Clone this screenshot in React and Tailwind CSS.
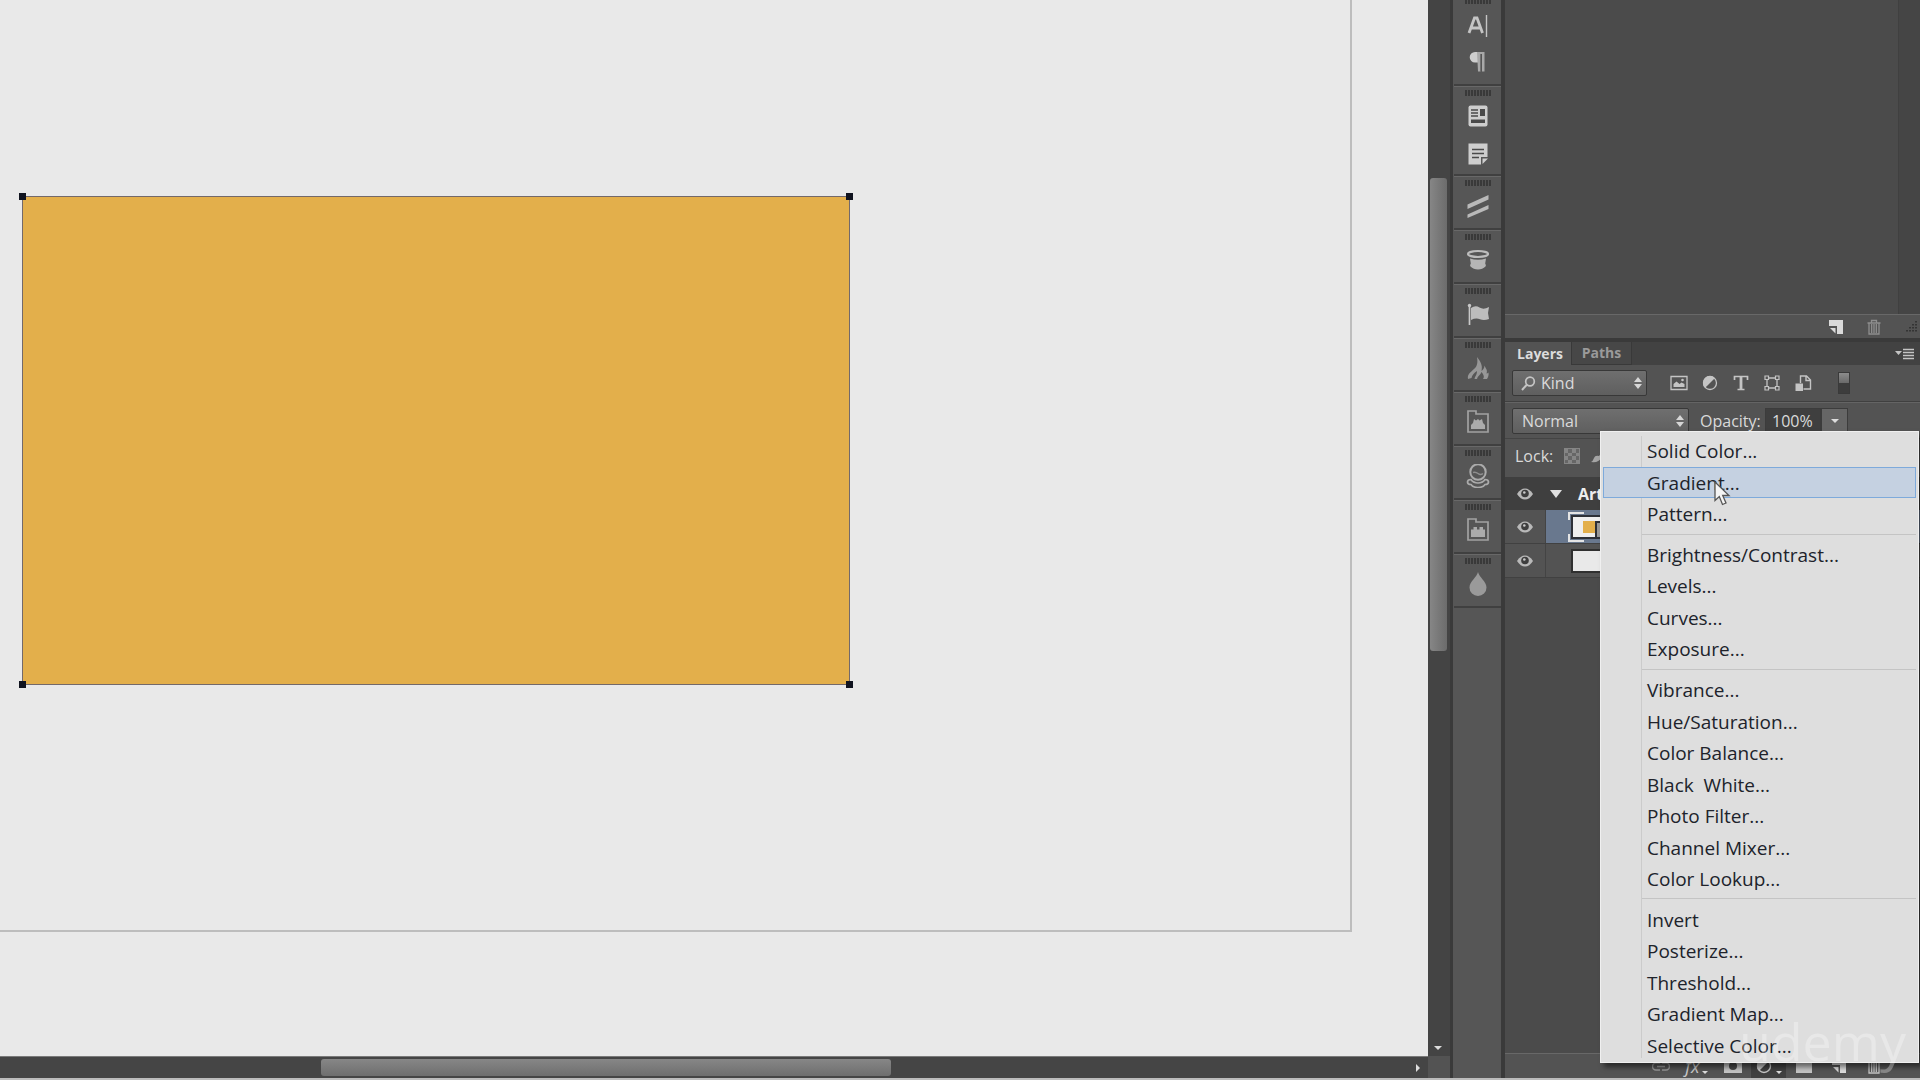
import { useState } from 'react';

const menuGroups = [
    ['Solid Color...', 'Gradient...', 'Pattern...'],
    ['Brightness/Contrast...', 'Levels...', 'Curves...', 'Exposure...'],
    [
        'Vibrance...',
        'Hue/Saturation...',
        'Color Balance...',
        'Black  White...',
        'Photo Filter...',
        'Channel Mixer...',
        'Color Lookup...',
    ],
    ['Invert', 'Posterize...', 'Threshold...', 'Gradient Map...', 'Selective Color...'],
];

/* ---------- icons ---------- */

const Icon = ({ size = 24, className = '', children }) => (
    <svg width={size} height={size} viewBox={`0 0 ${size} ${size}`} className={`shrink-0 ${className}`} fill="none" aria-hidden="true">
        {children}
    </svg>
);

const CharacterIcon = () => (
    <Icon>
        <path d="M3 20 8.500 5h2.500L16.500 20M5 15h9.500" stroke="#c4c4c4" strokeWidth="2.800" />
        <path d="M20.500 2v22" stroke="#c4c4c4" strokeWidth="1.400" />
    </Icon>
);

const ParagraphIcon = () => (
    <Icon>
        <path d="M12 3H9a5.300 5.300 0 0 0 0 10.600h3z" fill="#cecece" />
        <path d="M11 3h7.500v19.500H16V5h-1.500v17.500H12z" fill="#a8a8a8" />
        <path d="M15.200 5v17" stroke="#555" strokeWidth="1" />
    </Icon>
);

const LayoutIcon = () => (
    <Icon>
        <rect x="2.500" y="1.500" width="19" height="21" rx="2" fill="#cecece" />
        <path d="M5 6h7M5 9h7M5 12h7" stroke="#4a4a4a" strokeWidth="1.600" />
        <path d="M14 5h5v7h-5zM5 15.500h14v3.500H5z" fill="#4a4a4a" />
    </Icon>
);

const NotesIcon = () => (
    <Icon>
        <path d="M2.500 1.500h19V15H15v7.500H2.500z" fill="#cecece" />
        <path d="M16.500 22v-5.500H22z" fill="#cecece" />
        <path d="M6 7.500h12M6 11.500h12M6 15.500h7" stroke="#4a4a4a" strokeWidth="1.600" />
    </Icon>
);

const SlashesIcon = () => (
    <Icon>
        <path d="M1.500 10.500 22.500 1v4.500L1.500 15zM1.500 20.500 22.500 11v4L1.500 24z" fill="#b9b9b9" />
    </Icon>
);

const HatIcon = () => (
    <Icon>
        <ellipse cx="12" cy="6" rx="10" ry="3" stroke="#bdbdbd" strokeWidth="2.200" />
        <path d="M4 10.500q8 2.500 16 0l-.8 5q1.300 2 .3 3-3 3-7.500 3t-7.500-3q-1-1 .3-3z" fill="#b5b5b5" />
    </Icon>
);

const FlagIcon = () => (
    <Icon>
        <path d="M3.500 3v20" stroke="#c8c8c8" strokeWidth="1.700" />
        <circle cx="3.500" cy="3.500" r="1.700" fill="#c8c8c8" />
        <path d="M5 6q4.500-3 8.500-.5t9.500-.5l-1 6 1 6q-5 2-9 .3T5 18z" fill="#bdbdbd" />
    </Icon>
);

const FlameIcon = () => (
    <Icon>
        <path d="M2 23c-1-5 3-7 6-10 3-2.500 4-6 3-12 3 4 6 8 4.500 14 1.500-1 3-3 3-5.500 1 3 3.500 4.500 2 8 .8 0 1.500-.5 2-1 .5 3-.5 5-1.500 6.500h-4c2-2.500 0-5-1.500-7-1 3-4 4-4.500 7H8.500c.5-3 2.500-4 2.500-8-3 2-5 4-5.500 7z" fill="#979797" />
    </Icon>
);

const BrickFolderIcon = ({ peaked }) => (
    <Icon>
        <path d="M2 1h8v3h12v18H2z" stroke="#a2a2a2" strokeWidth="1.700" />
        {peaked ? (
            <path d="M5 19V15l2-2 1-4 2 1.500 2-1.500 1.500 1.500L16 9l1 4 2 2v4z" fill="#ababab" />
        ) : (
            <path d="M5 19V11.500h2.500V9H11v2.500h2.500V9H17v2.500h2V19z" fill="#ababab" />
        )}
    </Icon>
);

const CrystalIcon = () => (
    <Icon>
        <circle cx="12" cy="8" r="7.700" stroke="#ababab" strokeWidth="2" />
        <path d="M7 8.500q2.500-1 5 1t5 0" stroke="#8f8f8f" strokeWidth="1.500" />
        <path d="M5 15.500q-3.500 0-3.500 2.500 0 2.500 3.500 2.500 2 3 7 3t7-3q3.500 0 3.500-2.500t-3.500-2.500q-2.500 3.500-7 3.500t-7-3.500z" stroke="#ababab" strokeWidth="1.700" />
    </Icon>
);

const DropIcon = () => (
    <Icon>
        <path d="M12 0c1 5 8.500 9.500 8.500 15.500a8.500 8.500 0 0 1-17 0C3.500 9.500 11 5 12 0z" fill="#9a9a9a" />
    </Icon>
);

const PageIcon = () => (
    <Icon size={16}>
        <path d="M1 1h14v14H9V7H1z" fill="#dadada" />
        <path d="M2 9h5.500v5.500z" fill="#dadada" />
    </Icon>
);

const TrashIcon = ({ color = '#8f8f8f' }) => (
    <Icon size={16}>
        <path d="M1.500 4h13M5.500 3.500v-2h5v2M3 4v11h10V4M5.700 5v9M8 5v9M10.300 5v9" stroke={color} strokeWidth="1.300" />
    </Icon>
);

const EyeIcon = () => (
    <Icon size={18}>
        <path d="M1 9q3.500-5.500 8-5.500T17 9q-3.500 5.500-8 5.500T1 9z" fill="#b9b9b9" />
        <circle cx="9" cy="8.500" r="3.800" fill="#3e3e3e" />
        <circle cx="8.300" cy="7.500" r="1.300" fill="#c9c9c9" />
    </Icon>
);

const UpDown = () => (
    <svg width="8" height="12" viewBox="0 0 8 12" className="pointer-events-none absolute top-1/2 right-[5px] -translate-y-1/2" aria-hidden="true">
        <path d="M0 5 4 0l4 5zM0 7l4 5 4-5z" fill="#d6d6d6" />
    </svg>
);

const filterIcons = [
    {
        label: 'Pixel layers',
        icon: (
            <Icon size={18}>
                <path d="M1 2.500h16v13H1z" stroke="#c4c4c4" strokeWidth="1.300" />
                <path d="M3.500 13V10l3-2.500 3 2.500 2-1.500 3 1.500v3z" fill="#c4c4c4" />
                <circle cx="12.500" cy="6" r="1.300" fill="#c4c4c4" />
            </Icon>
        ),
    },
    {
        label: 'Adjustment layers',
        icon: (
            <Icon size={18}>
                <circle cx="9" cy="9" r="6.500" stroke="#c4c4c4" strokeWidth="1.300" />
                <path d="M13.800 4.200A6.800 6.800 0 1 0 4.200 13.800z" fill="#c4c4c4" />
            </Icon>
        ),
    },
    {
        label: 'Type layers',
        icon: (
            <Icon size={18}>
                <path d="M2.500 6V2.500h13V6M5.500 15.500h7" stroke="#c4c4c4" strokeWidth="1.700" />
                <path d="M9 3v12" stroke="#c4c4c4" strokeWidth="2.800" />
            </Icon>
        ),
    },
    {
        label: 'Shape layers',
        icon: (
            <Icon size={18}>
                <path d="M4 4h10v10H4z" stroke="#c4c4c4" strokeWidth="1.300" />
                <path d="M2 2h3.500v3.500H2zM12.500 2H16v3.500h-3.500zM2 12.500h3.500V16H2zM12.500 12.500H16V16h-3.500z" fill="#535353" stroke="#c4c4c4" strokeWidth="1.200" />
            </Icon>
        ),
    },
    {
        label: 'Smart objects',
        icon: (
            <Icon size={18}>
                <path d="M6.500 9V2h6L16.500 6v9h-7M12 2v4.500h4.500" stroke="#c4c4c4" strokeWidth="1.400" />
                <path d="M1.500 9.500H9V17H1.500z" fill="#c4c4c4" />
            </Icon>
        ),
    },
];

const dockGroups = [
    [
        { label: 'Layout', icon: <LayoutIcon /> },
        { label: 'Notes', icon: <NotesIcon /> },
    ],
    [{ label: 'Styles', icon: <SlashesIcon /> }],
    [{ label: 'Hat', icon: <HatIcon /> }],
    [{ label: 'Flag', icon: <FlagIcon /> }],
    [{ label: 'Flame', icon: <FlameIcon /> }],
    [{ label: 'Brick set', icon: <BrickFolderIcon peaked /> }],
    [{ label: 'Crystal ball', icon: <CrystalIcon /> }],
    [{ label: 'Brick folder', icon: <BrickFolderIcon /> }],
    [{ label: 'Drop', icon: <DropIcon /> }],
];

/* ---------- canvas ---------- */

const Handle = ({ className }) => <span className={`absolute size-[7px] bg-[#10131f] ${className}`} />;

const Canvas = () => (
    <main className="flex min-w-0 flex-1 flex-col">
        <div className="flex min-h-0 flex-1">
            <div className="relative flex-1 overflow-hidden bg-[#e9e9e9]">
                <div className="absolute top-0 left-0 h-[932px] w-[1352px] border-r-2 border-b-2 border-[#bdbdbd]" />
                <div className="absolute top-[196px] left-[22px] h-[489px] w-[828px] border border-[#73696a] bg-[#e3af4b]">
                    <Handle className="-top-1 -left-1" />
                    <Handle className="-top-1 -right-1" />
                    <Handle className="-bottom-1 -left-1" />
                    <Handle className="-right-1 -bottom-1" />
                </div>
            </div>
            <div className="flex w-[22px] flex-col justify-between bg-[#444] px-[2px] pt-[178px]">
                <div className="h-[473px] w-[17px] rounded-[3px] bg-linear-to-r from-[#868686] to-[#6c6c6c]" />
                <div className="mb-[6px] ml-1 w-0 border-x-4 border-t-4 border-x-transparent border-t-[#ddd]" />
            </div>
        </div>
        <div className="flex h-[22px] bg-[#535353]">
            <div className="flex flex-1 items-center justify-between border-t border-[#7a7a7a] bg-[#454545] pr-2">
                <div className="ml-[321px] h-[17px] w-[570px] rounded-[3px] bg-linear-to-b from-[#878787] to-[#6e6e6e]" />
                <div className="h-0 border-y-4 border-l-4 border-y-transparent border-l-[#ddd]" />
            </div>
            <div className="w-[22px]" />
        </div>
    </main>
);

/* ---------- icon dock ---------- */

const Grip = () => (
    <div className="h-[6px] w-[26px] bg-[repeating-linear-gradient(90deg,#393939_0_2px,#535353_2px_3px)]" />
);

const DockButton = ({ label, children }) => (
    <button type="button" aria-label={label} className="flex size-6 items-center justify-center">
        {children}
    </button>
);

const Dock = () => (
    <nav aria-label="Panel dock" className="flex w-[55px] shrink-0 flex-col border-r-4 border-l-3 border-[#3a3a3a] bg-[#565656] pl-px">
        <div className="flex h-[86px] flex-col items-center border-b-2 border-[#404040]">
            <div className="h-1 overflow-hidden"><Grip /></div>
            <div className="flex flex-col gap-3 pt-[9px]">
                <DockButton label="Character"><CharacterIcon /></DockButton>
                <DockButton label="Paragraph"><ParagraphIcon /></DockButton>
            </div>
        </div>
        {dockGroups.map((group) => (
            <div
                key={group[0].label}
                className={`flex flex-col items-center border-t border-b-2 border-t-[#686868] border-b-[#404040] pt-[3px] ${group.length > 1 ? 'h-[90px]' : 'h-[54px]'}`}
            >
                <Grip />
                <div className="flex flex-col gap-[14px] pt-2">
                    {group.map((item) => (
                        <DockButton key={item.label} label={item.label}>{item.icon}</DockButton>
                    ))}
                </div>
            </div>
        ))}
    </nav>
);

/* ---------- layers panel ---------- */

const LayerRow = ({ selected, children }) => (
    <li className="flex h-[34px] border-b border-[#414141] bg-[#535353]">
        <button type="button" aria-label="Toggle visibility" className="flex w-[41px] items-center justify-center border-r border-[#444]">
            <EyeIcon />
        </button>
        <div className={`flex flex-1 items-center pl-[22px] ${selected ? 'bg-[#69788e]' : ''}`}>{children}</div>
    </li>
);

const AdjustmentMenu = () => {
    const [active, setActive] = useState('Gradient...');

    return (
        <div
            role="menu"
            className="absolute right-px bottom-[15px] flex h-[632px] w-[319px] flex-col border border-[#f0f0f0] bg-[#dedede] px-[2px] pt-[3px] pb-px shadow-[4px_4px_5px_rgba(0,0,0,0.5)]"
        >
            {/* gutter rule */}
            <div className="absolute inset-y-1 left-10 w-px bg-[#cbcbcb]" />
            {menuGroups.map((group, i) => (
                <div key={group[0]} className="contents">
                    {i > 0 && <div role="separator" className="my-1 ml-[38px] h-px shrink-0 bg-[#c4c4c4]" />}
                    {group.map((item) => (
                        <button
                            key={item}
                            type="button"
                            role="menuitem"
                            onMouseEnter={() => setActive(item)}
                            className={`relative flex flex-1 items-center border pt-px pl-[43px] text-left text-[19px] leading-6 whitespace-pre text-[#20232b] ${active === item ? 'border-[#7eaadb] bg-[#c5d1e1]' : 'border-transparent'}`}
                        >
                            {item}
                        </button>
                    ))}
                </div>
            ))}
            <svg width="18" height="26" viewBox="0 0 18 26" className="pointer-events-none absolute top-[49px] left-[113px]" aria-hidden="true">
                <path d="M1 1v18.500l4.300-4 3.200 8 3.500-1.500-3.300-7.500H15z" fill="#f5f5f5" stroke="#555" strokeWidth="1.300" />
            </svg>
        </div>
    );
};

const LayersPanel = () => (
    <aside className="relative flex w-[415px] shrink-0 flex-col bg-[#535353] text-[16px] leading-5 text-[#dadada]">
        <div className="flex h-[314px] bg-[#4b4b4b]">
            <div className="flex-1" />
            <div className="w-[22px] border-l border-[#404040] bg-[#454545]" />
        </div>
        <div className="flex h-6 items-center justify-end gap-[22px] border-t border-[#686868] pr-[2px]">
            <button type="button" aria-label="New"><PageIcon /></button>
            <button type="button" aria-label="Delete"><TrashIcon /></button>
            <svg width="14" height="14" viewBox="0 0 14 14" aria-hidden="true">
                <path d="M12 1v12M9 4v9M6 7v6M3 10v3" stroke="#2e2e2e" strokeWidth="1.600" strokeDasharray="1.600 1.400" />
            </svg>
        </div>

        <div role="tablist" className="flex h-[27px] items-stretch border-t-4 border-[#3a3a3a] bg-[#424242] text-[14px] font-bold">
            <button type="button" role="tab" aria-selected="true" className="w-[66px] bg-[#535353] pl-1 text-[#dcdcdc]">Layers</button>
            <button type="button" role="tab" aria-selected="false" className="w-[61px] border-x border-b border-[#393939] bg-[#474747] text-[#9a9a9a]">Paths</button>
            <button type="button" aria-label="Panel menu" className="mr-[5px] ml-auto">
                <svg width="20" height="12" viewBox="0 0 20 12" aria-hidden="true">
                    <path d="M0 3h7L3.500 7z" fill="#c4c4c4" />
                    <path d="M8 1.500h11M8 4.500h11M8 7.500h11M8 10.500h11" stroke="#c4c4c4" strokeWidth="1.300" />
                </svg>
            </button>
        </div>

        <div className="flex h-[37px] items-center border-b border-[#404040] pl-[7px]">
            <div className="relative w-[135px]">
                <svg width="15" height="15" viewBox="0 0 15 15" className="pointer-events-none absolute top-[6px] left-[9px]" aria-hidden="true">
                    <circle cx="9" cy="5.500" r="4.300" fill="none" stroke="#c4c4c4" strokeWidth="1.700" />
                    <path d="M6 8.500 1 14" stroke="#c4c4c4" strokeWidth="2" />
                </svg>
                <select aria-label="Filter type" className="h-[26px] w-full appearance-none rounded-[2px] border border-[#383838] bg-linear-to-b from-[#6f6f6f] to-[#5f5f5f] pl-[28px]">
                    <option>Kind</option>
                </select>
                <UpDown />
            </div>
            <div className="flex gap-[13px] pl-[23px]">
                {filterIcons.map(({ label, icon }) => (
                    <button key={label} type="button" aria-label={label}>{icon}</button>
                ))}
            </div>
            <button type="button" aria-label="Toggle filter" className="ml-[26px] flex h-[22px] w-[12px] flex-col border border-[#3a3a3a] bg-[#3d3d3d]">
                <span className="h-[10px] w-full bg-linear-to-b from-[#8c8c8c] to-[#6a6a6a]" />
            </button>
        </div>

        <div className="flex h-[36px] items-center border-t border-[#646464] pl-[7px]">
            <div className="relative w-[177px]">
                <select aria-label="Blend mode" className="h-[26px] w-full appearance-none rounded-[2px] border border-[#383838] bg-linear-to-b from-[#6f6f6f] to-[#5f5f5f] pl-[9px]">
                    <option>Normal</option>
                </select>
                <UpDown />
            </div>
            <label htmlFor="opacity" className="w-[76px] pl-[11px]">Opacity:</label>
            <input id="opacity" defaultValue="100%" className="h-[26px] w-[56px] border border-[#3c3c3c] bg-[#3f3f3f] pl-[6px]" />
            <button type="button" aria-label="Opacity slider" className="flex h-[26px] w-[27px] items-center justify-center border border-[#3c3c3c] bg-[#666]">
                <span className="border-x-4 border-t-4 border-x-transparent border-t-[#ddd]" />
            </button>
        </div>

        <div className="flex h-[39px] items-center gap-[11px] border-t border-[#444] pb-1 pl-[10px]">
            <span className="w-[38px]">Lock:</span>
            <Icon size={16}>
                <path d="M0 0h16v16H0z" fill="#858585" />
                <path d="M4 1h4v4H4zM12 1h3v4h-3zM1 5h3v3H1zM8 5h4v3H8zM4 8h4v4H4zM12 8h3v4h-3zM1 12h3v3H1zM8 12h4v3H8z" fill="#666" />
            </Icon>
            <Icon size={16}>
                <path d="M0 14Q2 13 3 10T8 8L14 1l2 1-6 8q-2 5-10 4z" fill="#a5a5a5" />
            </Icon>
        </div>

        <ul className="flex-1 bg-[#4b4b4b]">
            <li className="flex h-[33px] items-center bg-[#3f3f3f] pl-[11px] text-[16px] font-bold">
                <button type="button" aria-label="Toggle visibility"><EyeIcon /></button>
                <button type="button" aria-label="Collapse" className="mr-4 ml-4 border-x-6 border-t-8 border-x-transparent border-t-[#e0e0e0]" />
                <span className="text-[#eee]">Artboard 1</span>
            </li>
            <LayerRow selected>
                <div className="relative p-[3px]">
                    <div className="flex h-[24px] w-[36px] items-center border-2 border-[#2d3037] bg-[#efefef] pl-[10px]">
                        <div className="size-3 bg-[#e3af4b]" />
                        <div className="h-4 w-2 self-end border-t-2 border-l-2 border-[#2d3037] bg-[#999]" />
                    </div>
                    <span className="absolute top-0 left-0 h-2 w-4 border-t-2 border-l-2 border-[#e4e4e4]" />
                    <span className="absolute bottom-0 left-0 h-2 w-4 border-b-2 border-l-2 border-[#e4e4e4]" />
                </div>
            </LayerRow>
            <LayerRow>
                <div className="ml-[3px] h-[24px] w-[36px] border-2 border-[#303030] bg-[#e9e9e9]" />
            </LayerRow>
        </ul>

        <div className="flex h-[25px] items-center gap-px border-t border-[#686868] pl-[138px]">
            <button type="button" aria-label="Link layers" className="flex w-[35px] justify-center">
                <Icon size={18}>
                    <path d="M8 6H4a3 3 0 0 0 0 7h4M10 6h4a3 3 0 0 1 0 7h-4M5 9.500h8" stroke="#969696" strokeWidth="1.600" />
                </Icon>
            </button>
            <button type="button" aria-label="Layer style" className="flex w-[35px] items-end justify-center text-[18px] leading-5 text-[#c8c8c8] italic">
                fx<span className="mb-[2px] ml-[2px] border-x-3 border-t-3 border-x-transparent border-t-[#ddd]" />
            </button>
            <button type="button" aria-label="Add mask" className="flex w-[35px] justify-center">
                <Icon size={18}>
                    <path d="M0 2h18v14H0z" fill="#c4c4c4" />
                    <circle cx="9" cy="9" r="4" fill="#484848" />
                </Icon>
            </button>
            <button type="button" aria-label="New adjustment layer" className="flex h-6 w-[35px] items-center justify-center bg-[#404040]">
                <Icon size={18}>
                    <circle cx="8" cy="9" r="6.500" stroke="#c4c4c4" strokeWidth="1.400" />
                    <path d="M12.800 4.200A6.800 6.800 0 1 0 3.200 13.800z" fill="#c4c4c4" />
                </Icon>
                <span className="mt-3 ml-[2px] border-x-3 border-t-3 border-x-transparent border-t-[#ddd]" />
            </button>
            <button type="button" aria-label="New group" className="flex w-[34px] justify-center">
                <Icon size={18}><path d="M1 2h7l1 2h8v12H1z" fill="#c4c4c4" /></Icon>
            </button>
            <button type="button" aria-label="New layer" className="flex w-[34px] justify-center"><PageIcon /></button>
            <button type="button" aria-label="Delete layer" className="flex w-[34px] justify-center"><TrashIcon color="#c4c4c4" /></button>
        </div>

        <AdjustmentMenu />
        <span className="pointer-events-none absolute right-[14px] bottom-[5px] text-[52px] leading-[64px] font-medium text-white/30">udemy</span>
    </aside>
);

export default function App() {
    return (
        <div className="flex h-screen flex-col overflow-hidden border-b-2 border-[#bcbcbc] bg-[#535353] font-['Open_Sans','Noto_Sans',sans-serif]">
            <div className="flex min-h-0 flex-1">
                <Canvas />
                <Dock />
                <LayersPanel />
            </div>
        </div>
    );
}
